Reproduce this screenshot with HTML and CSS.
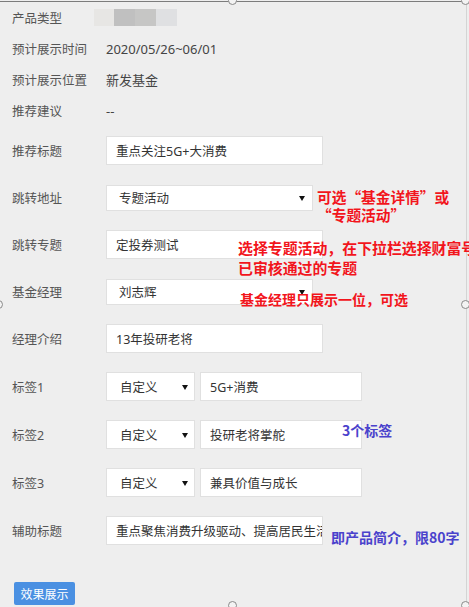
FILE: index.html
```html
<!DOCTYPE html>
<html lang="zh-CN">
<head>
<meta charset="utf-8">
<title>推荐配置</title>
<link rel="stylesheet" href="styles.css">
</head>
<body>
<div class="frame">
  <div class="info">
    <div class="info-row"><span class="label">产品类型</span><span class="blur"><i class="b1"></i><i class="b2"></i><i class="b3"></i><i class="b4"></i></span></div>
    <div class="info-row"><span class="label">预计展示时间</span><span class="value">2020/05/26~06/01</span></div>
    <div class="info-row"><span class="label">预计展示位置</span><span class="value">新发基金</span></div>
    <div class="info-row"><span class="label">推荐建议</span><span class="value">--</span></div>
  </div>

  <div class="group g1">
    <div class="row"><span class="label">推荐标题</span><div class="field w-input">重点关注5G+大消费</div></div>
    <div class="row"><span class="label">跳转地址</span><div class="field select w-select">专题活动</div></div>
    <div class="row"><span class="label">跳转专题</span><div class="field w-input">定投券测试</div></div>
    <div class="row"><span class="label">基金经理</span><div class="field select w-select">刘志辉</div></div>
    <div class="row"><span class="label">经理介绍</span><div class="field w-input">13年投研老将</div></div>
  </div>

  <div class="group g2">
    <div class="row"><span class="label">标签1</span><div class="field select tag-select">自定义</div><div class="field tag-input">5G+消费</div></div>
    <div class="row"><span class="label">标签2</span><div class="field select tag-select">自定义</div><div class="field tag-input">投研老将掌舵</div></div>
    <div class="row"><span class="label">标签3</span><div class="field select tag-select">自定义</div><div class="field tag-input">兼具价值与成长</div></div>
    <div class="row"><span class="label">辅助标题</span><div class="field w-input clip">重点聚焦消费升级驱动、提高居民生活质量</div></div>
  </div>

  <div class="actions"><button class="btn">效果展示</button></div>

  <div class="note red n1">可选“基金详情”或<br>“专题活动”</div>
  <div class="note red n2">选择专题活动，在下拉栏选择财富号<br>已审核通过的专题</div>
  <div class="note red n3">基金经理只展示一位，可选</div>
  <div class="note blue n4">3个标签</div>
  <div class="note blue n5">即产品简介，限80字</div>

  <span class="handle h-tm"></span>
  <span class="handle h-tr"></span>
  <span class="handle h-mr"></span>
  <span class="handle h-ml"></span>
  <span class="handle h-bm"></span>
  <span class="handle h-br"></span>
</div>
</body>
</html>
```

FILE: styles.css
```css
html, body {
  margin: 0;
  padding: 0;
  background: #eeeeee;
  overflow: hidden;
}
body {
  width: 469px;
  height: 607px;
  font-family: "Noto Sans", "Noto Sans CJK SC", sans-serif;
  font-size: 13px;
  color: #333;
}
.frame {
  position: relative;
  margin-top: 1px;
  width: 467px;
  height: 606px;
  border-top: 1px solid #7c7c7c;
  border-right: 1px solid #d4d4d4;
  box-sizing: border-box;
}
.label {
  width: 94px;
  flex: none;
  color: #555;
  font-size: 12.5px;
}
.info-row {
  display: flex;
  align-items: center;
  height: 31px;
  padding-left: 12px;
}
.value {
  color: #444;
}
.blur {
  display: flex;
  margin-left: -12px;
  height: 17px;
}
.blur i {
  display: block;
  width: 21px;
  height: 17px;
}
.blur .b1 { background: #e7e6e4; width: 20px; }
.blur .b2 { background: #c0c0c0; }
.blur .b3 { background: #c6c6c5; }
.blur .b4 { background: #dfe0e2; }

.group {
  display: flex;
  flex-direction: column;
}
.g1 { margin-top: 10px; gap: 18px; }
.g2 { margin-top: 19px; gap: 19px; }
.row {
  display: flex;
  align-items: center;
  height: 29px;
  padding-left: 12px;
  gap: 5px;
}
.row .label { width: 89px; }
.field {
  box-sizing: border-box;
  height: 29px;
  background: #fff;
  border: 1px solid #e0e0e0;
  padding-left: 9px;
  display: flex;
  align-items: center;
  white-space: nowrap;
  overflow: hidden;
  color: #333;
  font-size: 12.5px;
}
.w-input { width: 217px; }
.w-select { width: 207px; }
.select {
  position: relative;
  height: 26px;
  padding-left: 12px;
}
.select::after {
  content: "";
  position: absolute;
  right: 7px;
  top: 50%;
  margin-top: -2px;
  border-left: 3px solid transparent;
  border-right: 3px solid transparent;
  border-top: 5px solid #111;
}
.tag-select {
  width: 89px;
  height: 29px;
  padding-left: 13px;
}
.tag-select::after { right: 6px; }
.tag-input { width: 162px; }
.clip { padding-right: 0; }

.actions {
  margin-top: 37px;
  padding-left: 14px;
}
.btn {
  width: 61px;
  height: 23px;
  border: none;
  border-radius: 2px;
  background: #4a90e2;
  color: #fff;
  font-family: "Noto Sans CJK SC", sans-serif;
  font-size: 12px;
  padding: 0;
}

.note {
  position: absolute;
  font-family: "Noto Sans CJK SC", sans-serif;
  font-weight: 700;
  white-space: nowrap;
}
.red { color: #f2151c; }
.blue { color: #4a42cc; }
.n1 { left: 317px; top: 186px; font-size: 14.7px; line-height: 18px; }
.n2 { left: 238px; top: 236px; font-size: 14.9px; line-height: 20px; }
.n3 { left: 240px; top: 288px; font-size: 14px; line-height: 18px; }
.n4 { left: 342px; top: 419px; font-size: 14px; line-height: 18px; }
.n5 { left: 331px; top: 526px; font-size: 14px; line-height: 18px; }

.handle {
  position: absolute;
  width: 9px;
  height: 9px;
  border: 1px solid #8a8a8a;
  border-radius: 50%;
  background: #f3f3f3;
  box-sizing: border-box;
}
.h-tm { left: 228px; top: -6px; }
.h-tr { left: 461px; top: -6px; }
.h-mr { left: 461px; top: 298px; }
.h-ml { left: -6px; top: 298px; }
.h-bm { left: 228px; top: 599px; }
.h-br { left: 461px; top: 599px; }
```
